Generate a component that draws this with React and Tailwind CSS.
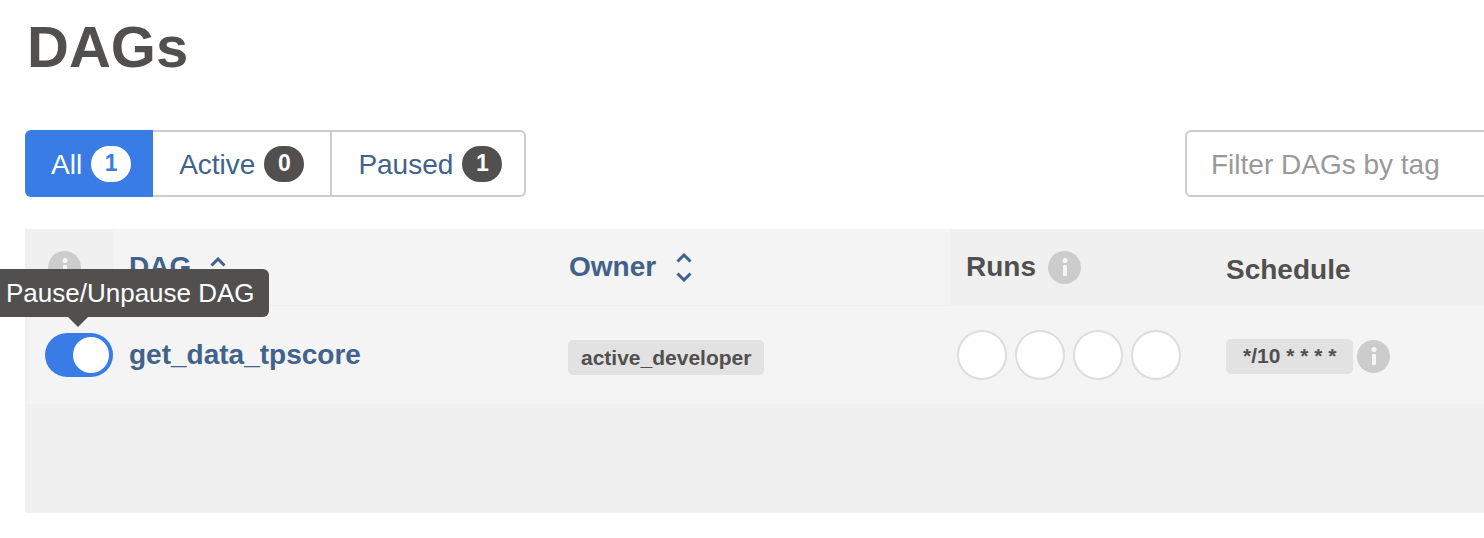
import React from 'react';

const BLUE = 'bg-[#3a7ce6]';

function Chevron({ down = false }) {
  return (
    <svg width="16" height="10" viewBox="0 0 16 10" className={down ? 'rotate-180' : ''}>
      <polyline points="1.5,8.5 8,2 14.5,8.5" fill="none" stroke="#41628b" strokeWidth="3" />
    </svg>
  );
}

function InfoDot({ className = '' }) {
  return (
    <span className={`inline-flex items-center justify-center w-[33px] h-[33px] rounded-full bg-[#cccccc] ${className}`}>
      <svg width="8" height="20" viewBox="0 0 8 20">
        <circle cx="4" cy="3.5" r="2.5" fill="#f5f5f5" />
        <rect x="2" y="8" width="4" height="11" rx="1" fill="#f5f5f5" />
      </svg>
    </span>
  );
}

function Tab({ label, count, active, first, last, pr }) {
  return (
    <div
      className={`flex items-center h-[67px] pl-[26px] gap-[9px] ${pr} ${
        active ? `${BLUE} text-white` : 'bg-white text-[#41628b] border-y-2 border-r-2 border-[#cccccc]'
      } ${first ? 'rounded-l-[6px]' : ''} ${last ? 'rounded-r-[6px]' : ''}`}
    >
      <span className="text-[28px] pt-[2px]">{label}</span>
      <span
        className={`flex items-center justify-center w-[40px] h-[36px] rounded-full text-[23px] font-bold ${
          active ? 'bg-white text-[#3a7ce6]' : 'bg-[#51504f] text-white'
        }`}
      >
        {count}
      </span>
    </div>
  );
}

export default function App() {
  return (
    <div className="w-full h-[538px] overflow-hidden bg-white font-['Liberation_Sans',Arial,sans-serif]">
      <div className="w-[1580px] pl-[25px]">
        <h1 className="mt-[18px] pl-[2px] text-[58px] leading-none font-bold text-[#51504f]">DAGs</h1>

        <div className="mt-[54px] flex items-center">
          <div className="flex">
            <Tab label="All" count="1" active first pr="pr-[22px]" />
            <Tab label="Active" count="0" pr="pr-[26px]" />
            <Tab label="Paused" count="1" last pr="pr-[22px]" />
          </div>
          <div className="ml-auto w-[395px] h-[67px] border-2 border-[#cccccc] rounded-[6px] flex items-center pl-[24px] pt-[2px] text-[28px] text-[#999999]">
            Filter DAGs by tag
          </div>
        </div>

        <div className="mt-[32px] bg-[#f0f0f0]">
          {/* header */}
          <div className="flex h-[76px]">
            <div className="w-[88px] flex items-center pl-[23px]">
              <InfoDot />
            </div>
            <div className="w-[440px] bg-[#f4f4f4] flex items-center pl-[16px] gap-[19px] text-[28px] font-bold text-[#41628b]">
              <span>DAG</span>
              <span className="-mt-[10px]"><Chevron /></span>
            </div>
            <div className="w-[397px] bg-[#f4f4f4] flex items-center pl-[16px] gap-[20px] text-[28px] font-bold text-[#41628b]">
              <span>Owner</span>
              <span className="flex flex-col gap-[9px]">
                <Chevron />
                <Chevron down />
              </span>
            </div>
            <div className="w-[260px] flex items-center pl-[16px] gap-[12px] text-[28px] font-bold text-[#51504f]">
              <span>Runs</span>
              <InfoDot />
            </div>
            <div className="flex-1 flex items-center pl-[16px] pt-[5px] text-[28px] font-bold text-[#51504f]">
              Schedule
            </div>
          </div>

          {/* row */}
          <div className="mt-[1px] ml-[3px] h-[98px] bg-[#f4f4f4] flex items-center">
            <div className="w-[85px] pl-[17px] relative">
              <div className="relative w-[68px] h-[44px] rounded-full bg-[#3a7ce6]">
                <span className="absolute right-[4px] top-[4px] w-[36px] h-[36px] rounded-full bg-white" />
                <div className="absolute left-[-53px] bottom-[60px] h-[48px] px-[14px] flex items-center rounded-[6px] bg-[#51504f] text-white text-[26px] whitespace-nowrap">
                  Pause/Unpause DAG
                  <span className="absolute left-[76px] top-full w-0 h-0 border-x-[10px] border-x-transparent border-t-[10px] border-t-[#51504f]" />
                </div>
              </div>
            </div>
            <div className="w-[440px] pl-[16px] text-[28px] font-bold text-[#41628b]">get_data_tpscore</div>
            <div className="w-[397px] pl-[15px] pt-[5px]">
              <span className="inline-flex items-center h-[35px] px-[13px] rounded-[5px] bg-[#e2e2e2] text-[21px] font-bold text-[#51504f]">
                active_developer
              </span>
            </div>
            <div className="w-[260px] pl-[7px] flex gap-[8px]">
              {[0, 1, 2, 3].map((i) => (
                <span key={i} className="w-[50px] h-[50px] rounded-full bg-white border-2 border-[#dddddd]" />
              ))}
            </div>
            <div className="flex-1 pl-[16px] pt-[2px] flex items-center gap-[4px]">
              <span className="inline-flex items-center h-[35px] px-[17px] rounded-[5px] bg-[#e2e2e2] text-[21px] font-bold text-[#51504f]">
                */10 * * * *
              </span>
              <InfoDot />
            </div>
          </div>

          <div className="h-[109px]" />
        </div>
      </div>
    </div>
  );
}
